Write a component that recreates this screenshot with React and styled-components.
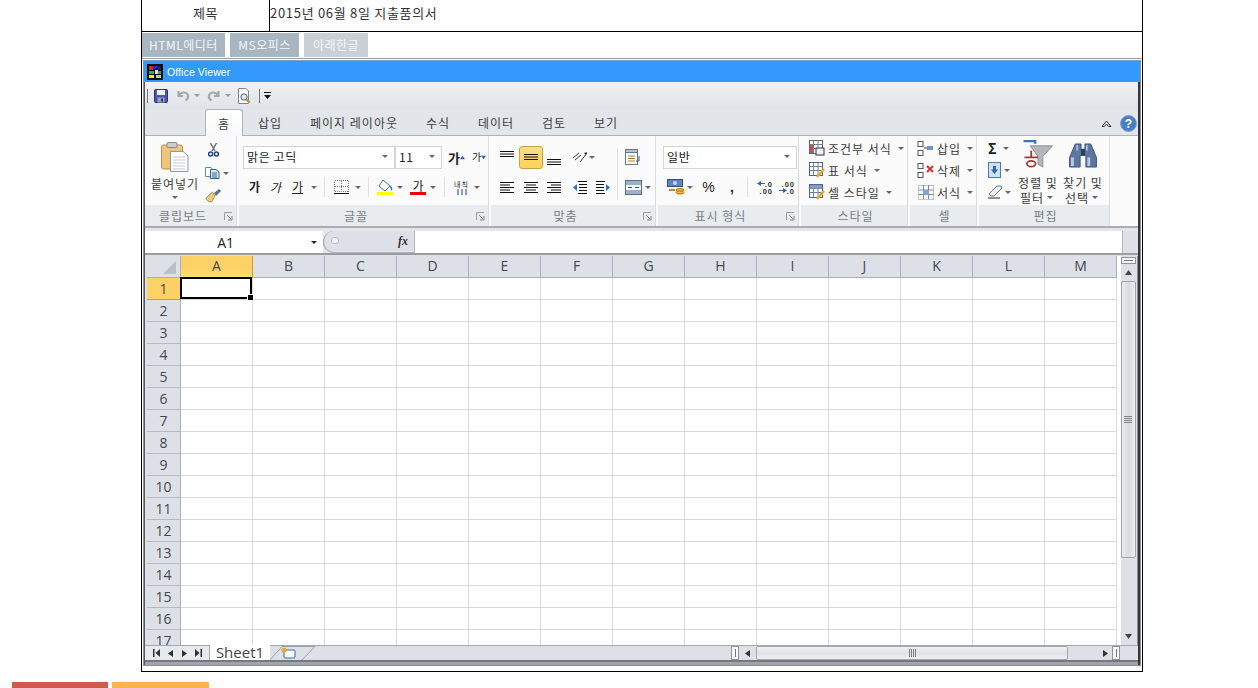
import React from 'react'
import styled, { createGlobalStyle } from 'styled-components'

const Global = createGlobalStyle`
  html, body { margin: 0; padding: 0; background: #fff; overflow: hidden; }
  body { font-family: "Noto Sans CJK KR", "Open Sans", sans-serif; color: #333; }
  * { box-sizing: border-box; }
`
const Page = styled.div`
  height: 688px;
  display: flex;
  flex-direction: column;
`
const Frame = styled.div`
  width: 1002px;
  height: 672px;
  flex: none;
  margin-left: 141px;
  border: 1px solid #000;
  border-top: 0;
  display: flex;
  flex-direction: column;
`
const TitleRow = styled.div`
  height: 32px;
  flex: none;
  display: flex;
  border-bottom: 1px solid #000;
  font-size: 13px;
  line-height: 26px;
`
const TitleHead = styled.div`
  width: 128px;
  border-right: 1px solid #000;
  text-align: center;
  letter-spacing: .5px;
`
const TitleValue = styled.div`
  letter-spacing: .7px;
`
const ModeTabs = styled.div`
  height: 27px;
  flex: none;
  display: flex;
  gap: 5px;
  padding: 1px 0;
  border-bottom: 1px solid #9a9a9a;
`
const ModeTab = styled.div`
  width: ${p => p.$w}px;
  background: ${p => p.$light ? '#c9d1d6' : '#a8b6c1'};
  color: #f2f5f7;
  font-size: 12px;
  line-height: 24px;
  letter-spacing: .5px;
  text-align: center;
`
const Viewer = styled.div`
  flex: 1;
  min-height: 0;
  margin: 1px 0 5px 1px;
  width: 998px;
  border: 1px solid #8f8f8f;
  border-top-color: #7a9cc0;
  display: flex;
  flex-direction: column;
`
const TitleBar = styled.div`
  height: 21px;
  flex: none;
  background: #3399ff;
  display: flex;
  align-items: center;
  gap: 4px;
  padding-left: 3px;
  color: #fff;
  font-size: 10.5px;
  letter-spacing: .1px;
  font-family: "Liberation Sans", sans-serif;
`
const AppBody = styled.div`
  flex: 1;
  min-height: 0;
  border-left: 1px solid #55585c;
  border-right: 2px solid #33363a;
  display: flex;
  flex-direction: column;
  background: #e2e6ea;
`
const Qat = styled.div`
  height: 27px;
  flex: none;
  display: flex;
  align-items: center;
  padding-left: 2px;
  background: linear-gradient(#f0f2f4, #dfe3e7);
`
const QatBar = styled.i`
  width: 1px;
  height: 14px;
  flex: none;
  background: #777;
  margin-left: ${p => p.$l || 0}px;
`
const Slot = styled.span`
  display: inline-flex;
  flex: none;
  margin-left: ${p => p.$l || 0}px;
`
const Caret = styled.i`
  width: 0;
  height: 0;
  flex: none;
  border-left: 3px solid transparent;
  border-right: 3px solid transparent;
  border-top: 3px solid ${p => p.$c || '#666'};
  margin: ${p => p.$m || '0 3px'};
`
const RibbonTabs = styled.div`
  height: 27px;
  flex: none;
  display: flex;
  align-items: stretch;
  padding-left: 60px;
  padding-right: 1px;
  border-bottom: 1px solid #aeb3b8;
  background: #e2e6ea;
`
const RibbonTab = styled.div`
  width: ${p => p.$w}px;
  font-size: 12px;
  line-height: 27px;
  letter-spacing: 1px;
  text-align: center;
  color: #3c3c3c;
  ${p => p.$active && `
    background: linear-gradient(#fff, #f8f9fa);
    border: 1px solid #aeb3b8;
    border-bottom: 0;
    border-radius: 3px 3px 0 0;
    margin-bottom: -1px;
    height: 27px;
  `}
`
const TabEnd = styled.div`
  margin-left: auto;
  display: flex;
  align-items: center;
  gap: 8px;
  padding-top: 2px;
`
const Ribbon = styled.div`
  height: 92px;
  flex: none;
  display: flex;
  gap: 2px;
  background: #fbfbfc;
  border-bottom: 2px solid #a9adb2;
`
const Group = styled.div`
  width: ${p => p.$w}px;
  flex: none;
  display: flex;
  flex-direction: column;
  border-right: 1px solid #d8dce0;
`
const GroupBody = styled.div`
  height: 69px;
  flex: none;
  display: flex;
  padding: ${p => p.$pt || 0}px 0 0 ${p => p.$pl || 0}px;
  gap: ${p => p.$gap || 0}px;
`
const Caption = styled.div`
  flex: 1;
  position: relative;
  background: #e9ecef;
  color: #777c82;
  font-size: 12px;
  line-height: 21px;
  letter-spacing: 1px;
  text-align: center;
  padding: ${p => p.$launch ? '0 15px 0 0' : '0 0 0 3px'};
`
const Launcher = styled.svg`
  position: absolute;
  right: 3px;
  top: 7px;
  width: 9px;
  height: 9px;
`
const Col = styled.div`
  display: flex;
  flex: none;
  flex-direction: column;
  width: ${p => p.$w ? `${p.$w}px` : 'auto'};
  align-items: ${p => p.$align || 'flex-start'};
  gap: ${p => p.$gap || 0}px;
  padding-top: ${p => p.$pt || 0}px;
`
const Row = styled.div`
  display: flex;
  align-items: center;
  height: ${p => p.$h || 22}px;
  gap: ${p => p.$gap || 0}px;
  padding-left: ${p => p.$pl || 0}px;
  color: #3c3c3c;
  font-size: 12px;
  letter-spacing: 1px;
  white-space: nowrap;
`
const Combo = styled.div`
  width: ${p => p.$w}px;
  height: 23px;
  border: 1px solid #d2d6da;
  background: #fff;
  display: flex;
  align-items: center;
  justify-content: space-between;
  padding: 0 3px 2px;
  font-size: 12px;
  letter-spacing: .6px;
  color: #222;
`
const BigLabel = styled.div`
  font-size: 12px;
  line-height: 15px;
  letter-spacing: 1px;
  text-align: center;
  color: #3c3c3c;
  white-space: nowrap;
  margin-top: ${p => p.$mt || 0}px;
`
const Sep = styled.i`
  width: 1px;
  height: ${p => p.$h || 20}px;
  flex: none;
  background: #dfe2e5;
  margin: ${p => p.$m || '0 4px'};
`
const ActiveBtn = styled.div`
  width: 24px;
  height: 23px;
  border: 1px solid #c9a04e;
  border-radius: 3px;
  background: linear-gradient(#ffdf7f, #ffd257);
  display: flex;
  align-items: center;
  justify-content: center;
  margin-left: ${p => p.$l || 0}px;
`
const Glyph = styled.span`
  font-size: ${p => p.$s || 12}px;
  font-weight: ${p => p.$b ? 700 : 400};
  font-style: ${p => p.$i ? 'italic' : 'normal'};
  text-decoration: ${p => p.$u ? 'underline' : 'none'};
  color: #222;
  line-height: 1;
  letter-spacing: 0;
  flex: none;
  margin-left: ${p => p.$l || 0}px;
`
const ColorGlyph = styled(Glyph)`
  width: 16px;
  text-align: center;
  line-height: 13px;
  border-bottom: 3px solid #e00;
`
const Symbol = styled(Glyph)`
  font-family: "Liberation Sans", sans-serif;
  font-size: 14px;
  width: ${p => p.$w}px;
  text-align: center;
`
const FormulaBar = styled.div`
  height: 27px;
  flex: none;
  display: flex;
  padding-top: 3px;
  background: #e2e6ea;
  border-bottom: 2px solid #9a9ea3;
`
const NameBox = styled.div`
  width: 178px;
  display: flex;
  align-items: center;
  justify-content: flex-end;
  padding-right: 6px;
  gap: 77px;
  background: #fff;
  font-size: 14px;
  color: #222;
  font-family: "Open Sans", sans-serif;
`
const FxBox = styled.div`
  width: 92px;
  position: relative;
  background: #dde1e7;
  border: 1px solid #b4b8bd;
  border-left-color: #9ea3a8;
  border-top: 0;
  border-radius: 12px 0 0 12px;
  display: flex;
  align-items: center;
  justify-content: flex-end;
  padding-right: 6px;
  font-family: "Liberation Serif", serif;
  font-style: italic;
  font-weight: 700;
  font-size: 12px;
  color: #333;
  &::before {
    content: '';
    position: absolute;
    left: 7px;
    top: 6px;
    width: 6px;
    height: 5px;
    border-radius: 3px;
    background: #f1f3f5;
    border: 1px solid #b9bdc2;
  }
`
const FormulaInput = styled.div`
  flex: 1;
  background: #fff;
`
const FormulaEnd = styled.div`
  width: 16px;
  background: #dde1e7;
  border-left: 1px solid #b4b8bd;
`
const SheetArea = styled.div`
  flex: 1;
  min-height: 0;
  display: flex;
  background: #dde1e7;
  padding: 1px 0 0 2px;
`
const GridWrap = styled.div`
  width: 974px;
  flex: none;
  overflow: hidden;
  position: relative;
  background: #fff;
`
const Cells = styled.div`
  display: grid;
  grid-template-columns: 34px repeat(13, 72px);
  grid-auto-rows: 22px;
`
const ColHead = styled.div`
  background: ${p => p.$on ? 'linear-gradient(#fdd166 60%, #ffe06e)' : '#dde1e7'};
  border-right: 1px solid ${p => p.$on ? '#d09a34' : '#a9b0b8'};
  border-bottom: 1px solid ${p => p.$on ? '#d09a34' : '#a9b0b8'};
  color: #44484e;
  font-size: 14px;
  line-height: 20px;
  text-align: center;
  font-family: "Open Sans", sans-serif;
  position: relative;
`
const RowHead = styled.div`
  background: ${p => p.$on ? '#fdd166' : '#dde1e7'};
  border-right: 1px solid ${p => p.$on ? '#d09a34' : '#a9b0b8'};
  border-bottom: 1px solid ${p => p.$on ? '#d09a34' : '#b4bac1'};
  color: #44484e;
  font-size: 14px;
  line-height: 21px;
  text-align: center;
  font-family: "Open Sans", sans-serif;
`
const Cell = styled.div`
  border-right: 1px solid #d9d9d9;
  border-bottom: 1px solid #d9d9d9;
  position: relative;
`
const Corner = styled.i`
  position: absolute;
  right: 4px;
  bottom: 3px;
  width: 0;
  height: 0;
  border-left: 13px solid transparent;
  border-bottom: 13px solid #b9bfc6;
`
const Selection = styled.div`
  position: absolute;
  inset: -1px 0 0 -1px;
  border: 2px solid #000;
  &::after {
    content: '';
    position: absolute;
    right: -4px;
    bottom: -4px;
    width: 5px;
    height: 5px;
    background: #000;
    border: 1px solid #fff;
  }
`
const VScroll = styled.div`
  width: 17px;
  flex: none;
  display: flex;
  flex-direction: column;
  align-items: center;
  padding-right: 2px;
  background: #dde1e7;
  border-right: 1px solid #8a8e93;
`
const Splitter = styled.div`
  width: 15px;
  height: 7px;
  flex: none;
  margin-top: 1px;
  background: #f4f5f7;
  border: 1px solid #8e9399;
  display: flex;
  align-items: center;
  justify-content: center;
  &::after { content: ''; width: 9px; height: 1px; background: #777; }
`
const ScrollBtn = styled.div`
  height: ${p => p.$h}px;
  width: ${p => p.$w ? `${p.$w}px` : 'auto'};
  flex: none;
  display: flex;
  align-items: center;
  justify-content: center;
`
const VThumb = styled.div`
  width: 15px;
  height: 277px;
  flex: none;
  background: linear-gradient(90deg, #e8ebee, #d7dbe0 50%, #eceef0);
  border: 1px solid #9ea3a9;
  border-radius: 2px;
  display: flex;
  flex-direction: column;
  align-items: center;
  justify-content: center;
  gap: 1px;
`
const Grip = styled.i`
  width: ${p => p.$v ? '1px' : '8px'};
  height: ${p => p.$v ? '8px' : '1px'};
  background: #7d8186;
`
const Spacer = styled.div`
  flex: 1;
`
const BottomBar = styled.div`
  height: 15px;
  flex: none;
  display: flex;
  align-items: stretch;
  background: #dde1e7;
  border-top: 1px solid #a4a9af;
`
const BottomEdge = styled.div`
  height: 5px;
  flex: none;
  background: #a0a5ab;
  border-top: 2px solid #767a80;
`
const SheetNav = styled.div`
  width: 65px;
  flex: none;
  display: flex;
  align-items: center;
  justify-content: space-around;
  padding: 0 4px 0 5px;
  background: #e6e9ed;
  border-right: 1px solid #a4a9af;
`
const SheetTab = styled.div`
  width: 60px;
  flex: none;
  background: #fff;
  margin-top: -1px;
  font-family: "Open Sans", sans-serif;
  font-size: 15px;
  line-height: 15px;
  color: #444;
  text-align: center;
  white-space: nowrap;
`
const NewSheet = styled.svg`
  width: 46px;
  height: 14px;
  flex: none;
`
const HScrollArea = styled.div`
  margin-left: auto;
  display: flex;
  align-items: center;
  width: 407px;
  flex: none;
`
const MiniSplit = styled.i`
  width: 8px;
  height: 14px;
  flex: none;
  background: #fafafa;
  border: 1px solid #8e9399;
  display: flex;
  justify-content: center;
  margin-right: ${p => p.$r || 0}px;
  &::after { content: ''; width: 1px; height: 8px; margin-top: 2px; background: #777; }
`
const HThumb = styled.div`
  width: 312px;
  height: 14px;
  flex: none;
  background: linear-gradient(#eef0f2, #dfe3e7 50%, #edeff1);
  border: 1px solid #a4a9af;
  border-radius: 2px;
  display: flex;
  align-items: center;
  justify-content: center;
  gap: 1px;
`
const ColorBars = styled.div`
  flex: 1;
  display: flex;
  align-items: flex-end;
  gap: 4px;
  padding-left: 12px;
`
const ColorBar = styled.i`
  width: ${p => p.$w}px;
  height: 6px;
  background: ${p => p.$c};
`

const Tri = ({ dir = 'down', size = 7, color = '#555' }) => {
  const pts = { down: '0,1 7,1 3.5,6', up: '0,6 7,6 3.5,1', left: '6,0 6,7 1,3.5', right: '1,0 1,7 6,3.5' }
  return <svg width={size} height={size} viewBox="0 0 7 7"><polygon points={pts[dir]} fill={color} /></svg>
}

const NavEnd = ({ last }) => (
  <svg width="8" height="8" viewBox="0 0 8 8">
    {last
      ? <path d="M1 0 L5.5 4 L1 8 Z M6.5 0 H8 V8 H6.5 Z" fill="#333" />
      : <path d="M7 0 L2.5 4 L7 8 Z M0 0 H1.5 V8 H0 Z" fill="#333" />}
  </svg>
)

const Lines = ({ widths = [14, 10, 14, 10, 14], y = 3, step = 2.5, anchor = 'left', color = '#111' }) => (
  <svg width="16" height="16" viewBox="0 0 16 16">
    {widths.map((w, i) => {
      const x = anchor === 'left' ? 1 : anchor === 'right' ? 15 - w : 8 - w / 2
      return <rect key={i} x={x} y={y + i * step} width={w} height="1" fill={color} />
    })}
  </svg>
)

const LogoIcon = () => (
  <svg width="16" height="16" viewBox="0 0 16 16" shapeRendering="crispEdges">
    <rect x=".5" y=".5" width="15" height="15" fill="#000" stroke="#111" />
    <rect x="2" y="2" width="4" height="4" fill="#d22" />
    <rect x="6" y="2" width="4" height="3" fill="#22c" />
    <rect x="10" y="2" width="4" height="4" fill="#225" />
    <rect x="2" y="7" width="5" height="3" fill="#2b3" />
    <rect x="8" y="6" width="3" height="4" fill="#dde" />
    <rect x="11" y="7" width="3" height="3" fill="#2a5" />
    <rect x="2" y="11" width="5" height="3" fill="#ee2" />
    <rect x="9" y="11" width="5" height="3" fill="#9d9" />
  </svg>
)

const SaveIcon = () => (
  <svg width="14" height="14" viewBox="0 0 14 14">
    <rect x=".5" y=".5" width="13" height="13" rx="1" fill="#4a54a8" stroke="#2c3478" />
    <rect x="3" y="1" width="8" height="5" fill="#eef" />
    <rect x="3.5" y="8.5" width="7" height="5" fill="#9aa0c8" />
    <rect x="7" y="9.5" width="2" height="3" fill="#334" />
  </svg>
)

const UndoIcon = ({ flip }) => (
  <svg width="14" height="13" viewBox="0 0 14 13">
    <g transform={flip ? 'matrix(-1 0 0 1 14 0)' : undefined}>
      <path d="M2.5 2 V7 H7 M3 6.5 C5 2.5 11 2.5 12 6.5 C12.5 8.5 11 10.5 9.5 11.5" fill="none" stroke="#a3a8ad" strokeWidth="2.2" />
    </g>
  </svg>
)

const PreviewIcon = () => (
  <svg width="16" height="16" viewBox="0 0 16 16">
    <path d="M1.5 .5 H9 L11.5 3 V15.5 H1.5 Z" fill="#fff" stroke="#7b8492" />
    <circle cx="7" cy="9" r="3.2" fill="#dbe7f3" stroke="#56606e" />
    <path d="M9.5 11.5 L12.5 14.5" stroke="#d08a20" strokeWidth="2.2" />
  </svg>
)

const QatMore = () => (
  <svg width="7" height="7" viewBox="0 0 7 7">
    <rect x="0" y="0" width="7" height="1" fill="#111" />
    <polygon points="0,3 7,3 3.5,7" fill="#111" />
  </svg>
)

const HelpIcon = () => (
  <svg width="17" height="17" viewBox="0 0 17 17">
    <circle cx="8.5" cy="8.5" r="8" fill="#4a7ec4" stroke="#7ea4d6" />
    <text x="8.5" y="13" textAnchor="middle" fontSize="12" fontWeight="700" fill="#fff" fontFamily="Liberation Sans">?</text>
  </svg>
)

const PasteIcon = () => (
  <svg width="28" height="30" viewBox="0 0 28 30">
    <rect x=".5" y="3" width="21" height="24" rx="2" fill="#eec57c" stroke="#b98f4d" />
    <rect x="6" y=".5" width="10" height="5" rx="1" fill="#c9ccd0" stroke="#87898d" />
    <path d="M9.5 9.5 H22 L27 14 V29.5 H9.5 Z" fill="#fff" stroke="#8d97a3" />
    <path d="M12 15 H24 M12 18 H24 M12 21 H24 M12 24 H24 M12 27 H24" stroke="#c3c9d0" />
  </svg>
)

const CutIcon = () => (
  <svg width="11" height="14" viewBox="0 0 11 14">
    <path d="M2.5 0 L7 8 M8.5 0 L4 8" stroke="#6d7278" strokeWidth="1.5" />
    <circle cx="2.6" cy="11" r="2" fill="none" stroke="#24408c" strokeWidth="1.5" />
    <circle cx="8.4" cy="11" r="2" fill="none" stroke="#24408c" strokeWidth="1.5" />
  </svg>
)

const CopyIcon = () => (
  <svg width="15" height="12" viewBox="0 0 15 12">
    <path d="M.5 .5 H6 L8 2.5 V9.5 H.5 Z" fill="#fff" stroke="#5a86bb" />
    <path d="M5.5 2.5 H11 L14 5 V11.5 H5.5 Z" fill="#dfeaf6" stroke="#33609c" />
    <path d="M7 6 H12 M7 8 H12 M7 10 H12" stroke="#33609c" />
  </svg>
)

const BrushIcon = () => (
  <svg width="16" height="14" viewBox="0 0 16 14">
    <path d="M9 4 L14 0 L16 2 L11 7 Z" fill="#5c6d96" />
    <path d="M10 7 L7.5 3 L1 9 C1 11 3 13 6.5 13 Z" fill="#e5cc86" stroke="#b09550" />
  </svg>
)

const BordersIcon = () => (
  <svg width="15" height="15" viewBox="0 0 15 15" shapeRendering="crispEdges">
    <rect x=".5" y=".5" width="14" height="11" fill="none" stroke="#777" strokeDasharray="1 1" />
    <path d="M7.5 .5 V12 M.5 6.5 H14.5" stroke="#777" strokeDasharray="1 1" />
    <rect x="0" y="13" width="15" height="1" fill="#111" />
  </svg>
)

const FillIcon = () => (
  <svg width="16" height="16" viewBox="0 0 16 16">
    <path d="M6 1 L13 7 L8 12 L2 7 Z" fill="#fff" stroke="#546a8c" />
    <path d="M13 7 C15 9 15 10 14 11" fill="none" stroke="#2d6fb3" strokeWidth="1.5" />
    <rect x="0" y="13" width="16" height="3" fill="#ffff00" />
  </svg>
)

const WrapIcon = () => (
  <svg width="15" height="17" viewBox="0 0 15 17">
    <text x="7.5" y="8" textAnchor="middle" fontSize="7" fill="#111" fontFamily="Noto Sans CJK KR">내칙</text>
    <path d="M4 10 V16 M8 10 V16 M12 10 V16" stroke="#2f62a8" strokeWidth="1.2" />
  </svg>
)

const OrientIcon = () => (
  <svg width="16" height="12" viewBox="0 0 16 12">
    <path d="M1 7 L7 2 M3 9 L9 4 M8 11 L15 2" stroke="#333" fill="none" />
    <path d="M15 1 L12 2 L14 4 Z" fill="#333" />
  </svg>
)

const IndentIcon = ({ flip }) => (
  <svg width="16" height="15" viewBox="0 0 16 15">
    <g transform={flip ? 'matrix(-1 0 0 1 16 0)' : undefined}>
      <path d="M6 1.5 H15 M7 4.5 H15 M7 7.5 H15 M7 10.5 H15 M6 13.5 H15" stroke="#111" />
      <path d="M1 7.5 L5 4 V11 Z" fill="#2f6fc0" />
    </g>
  </svg>
)

const TextWrapIcon = () => (
  <svg width="17" height="16" viewBox="0 0 17 16">
    <rect x=".5" y="2.5" width="12" height="13" fill="#fff" stroke="#6a7685" />
    <rect x=".5" y=".5" width="12" height="3" fill="#b7c2d0" stroke="#6a7685" />
    <path d="M3 7 H10 M3 9.5 H10 M3 12 H10" stroke="#b07a30" />
    <path d="M14 7 V12 H11" fill="none" stroke="#2d5b93" />
  </svg>
)

const MergeIcon = () => (
  <svg width="17" height="15" viewBox="0 0 17 15">
    <rect x=".5" y=".5" width="16" height="14" fill="#9db0c7" stroke="#5d708a" />
    <rect x="1" y="5" width="15" height="5" fill="#fff" />
    <path d="M3 7.5 H7 M10 7.5 H14" stroke="#2d5b93" />
  </svg>
)

const AccountingIcon = () => (
  <svg width="18" height="16" viewBox="0 0 18 16">
    <rect x=".5" y=".5" width="15" height="7" fill="#5f86bd" stroke="#2e4f80" />
    <circle cx="8" cy="4" r="2" fill="#c8d8ea" />
    <ellipse cx="13" cy="11" rx="4" ry="1.6" fill="#f0b93c" stroke="#b07c14" />
    <ellipse cx="13" cy="13.5" rx="4" ry="1.6" fill="#f0b93c" stroke="#b07c14" />
    <path d="M2 11 H8" stroke="#c78a1c" strokeWidth="2" />
  </svg>
)

const DecimalIcon = ({ top, bottom, arrowTop }) => (
  <svg width="18" height="15" viewBox="0 0 18 15">
    <text x="17" y="6.5" textAnchor="end" fontSize="7.5" fontWeight="700" fill="#333" fontFamily="Liberation Sans">{top}</text>
    <text x="17" y="14" textAnchor="end" fontSize="7.5" fontWeight="700" fill="#333" fontFamily="Liberation Sans">{bottom}</text>
    <path d={arrowTop ? 'M1 3.5 L5 1 V6 Z M5 3 H9 V4 H5 Z' : 'M9 10.5 L5 8 V13 Z M1 10 H5 V11 H1 Z'} fill="#2f62a8" />
  </svg>
)

const TableStyleIcon = ({ kind }) => (
  <svg width="16" height="16" viewBox="0 0 16 16">
    <rect x=".5" y=".5" width="13" height="13" fill="#fff" stroke="#53647c" />
    <path d="M.5 4.5 H13.5 M.5 8.5 H13.5 M4.5 .5 V13.5 M9 .5 V13.5" stroke="#6f82a0" />
    {kind === 'cond' && <rect x="1" y="5" width="3" height="8" fill="#d84a3a" />}
    {kind === 'cond' && <rect x="7" y="8" width="8" height="7" fill="#eef" stroke="#333" />}
    {kind === 'cell' && <rect x="1" y="1" width="12" height="3.5" fill="#7f9dc8" />}
    {kind !== 'cond' && <path d="M8 15 L15 7" stroke="#e6a92c" strokeWidth="2.4" />}
  </svg>
)

const CellOpIcon = ({ kind }) => (
  <svg width="17" height="15" viewBox="0 0 17 15">
    <rect x="1" y=".5" width="5" height="5" fill="#fff" stroke="#555" />
    <rect x="1" y="9.5" width="5" height="5" fill="#fff" stroke="#555" />
    {kind === 'ins' && <rect x="10" y="5" width="6" height="4" fill="#6d95cc" />}
    {kind === 'ins' && <path d="M7 7 H10" stroke="#333" />}
    {kind === 'del' && <path d="M10 3 L16 9 M16 3 L10 9" stroke="#dd3322" strokeWidth="2" />}
  </svg>
)

const FormatIcon = () => (
  <svg width="17" height="16" viewBox="0 0 17 16">
    <rect x="1.5" y="1.5" width="15" height="14" fill="#fff" stroke="#7d8894" strokeDasharray="1 1" />
    <path d="M1.5 6 H16.5 M1.5 10.5 H16.5 M6.5 1 V15 M11.5 1 V15" stroke="#7d8894" />
    <rect x="6" y="6" width="6" height="5" fill="#7fa3d4" />
  </svg>
)

const FillDownIcon = () => (
  <svg width="13" height="16" viewBox="0 0 13 16">
    <rect x=".5" y=".5" width="12" height="15" fill="#cfe0f3" stroke="#4d79b2" />
    <path d="M6.5 12 L3 7.5 H5 V4 H8 V7.5 H10 Z" fill="#2d66b8" />
  </svg>
)

const EraserIcon = () => (
  <svg width="15" height="14" viewBox="0 0 15 14">
    <path d="M1 9 L9 1 H13 L14 3 L6 11 H3 Z" fill="#eceff3" stroke="#6e7a88" />
    <path d="M0 13 H12" stroke="#222" />
  </svg>
)

const SortIcon = () => (
  <svg width="32" height="30" viewBox="0 0 32 30">
    <path d="M1 1 H13 V4" fill="none" stroke="#3f74bd" strokeWidth="2.6" />
    <path d="M8 6 H31 L21 17 V28 L16 25 V17 Z" fill="#b3b7bc" stroke="#8b8f94" />
    <path d="M2 18 H16" stroke="#a0352d" strokeWidth="1.8" />
    <ellipse cx="9" cy="24.5" rx="4.5" ry="3" fill="none" stroke="#a0352d" strokeWidth="1.8" />
    <path d="M9 11 V18" stroke="#a0352d" strokeWidth="1.8" />
  </svg>
)

const FindIcon = () => (
  <svg width="30" height="26" viewBox="0 0 30 26">
    <path d="M7 1 H13 V9 H17 V1 H23 L29 15 V25 H18 V13 H12 V25 H1 V15 Z" fill="#5d76a1" stroke="#3f5379" />
    <rect x="2.5" y="15" width="3" height="9" fill="#b8c9e0" />
    <rect x="19.5" y="15" width="3" height="9" fill="#b8c9e0" />
    <rect x="8" y="2" width="2" height="6" fill="#a7bad6" />
    <rect x="18" y="2" width="2" height="6" fill="#a7bad6" />
    <rect x="13" y="6" width="4" height="7" fill="#2c3c5c" />
  </svg>
)

const Launch = () => (
  <Launcher viewBox="0 0 9 9">
    <path d="M.5 8 V.5 H8" fill="none" stroke="#9aa0a6" />
    <path d="M3 3 L7 7 M8 4 V8 H4" fill="none" stroke="#7f858b" />
  </Launcher>
)

const colLetters = 'ABCDEFGHIJKLM'.split('')
const rowNums = Array.from({ length: 17 }, (_, i) => i + 1)

function SheetGrid() {
  return (
    <Cells>
      <ColHead><Corner /></ColHead>
      {colLetters.map(c => <ColHead key={c} $on={c === 'A'}>{c}</ColHead>)}
      {rowNums.map(r => (
        <React.Fragment key={r}>
          <RowHead $on={r === 1}>{r}</RowHead>
          {colLetters.map(c => (
            <Cell key={c}>{r === 1 && c === 'A' && <Selection />}</Cell>
          ))}
        </React.Fragment>
      ))}
    </Cells>
  )
}

export default function App() {
  return (
    <Page>
      <Global />
      <Frame>
        <TitleRow>
          <TitleHead>제목</TitleHead>
          <TitleValue>2015년 06월 8일 지출품의서</TitleValue>
        </TitleRow>
        <ModeTabs>
          <ModeTab $w={83}>HTML에디터</ModeTab>
          <ModeTab $w={69}>MS오피스</ModeTab>
          <ModeTab $w={64} $light>아래한글</ModeTab>
        </ModeTabs>
        <Viewer>
          <TitleBar><LogoIcon />Office Viewer</TitleBar>
          <AppBody>
            <Qat>
              <QatBar />
              <Slot $l={6}><SaveIcon /></Slot>
              <Slot $l={8}><UndoIcon /></Slot>
              <Caret $m="0 0 0 4px" $c="#999" />
              <Slot $l={7}><UndoIcon flip /></Slot>
              <Caret $m="0 0 0 4px" $c="#999" />
              <Slot $l={6}><PreviewIcon /></Slot>
              <QatBar $l={6} />
              <Slot $l={4}><QatMore /></Slot>
            </Qat>
            <RibbonTabs>
              <RibbonTab $active $w={38}>홈</RibbonTab>
              <RibbonTab $w={54}>삽입</RibbonTab>
              <RibbonTab $w={114}>페이지 레이아웃</RibbonTab>
              <RibbonTab $w={54}>수식</RibbonTab>
              <RibbonTab $w={62}>데이터</RibbonTab>
              <RibbonTab $w={54}>검토</RibbonTab>
              <RibbonTab $w={50}>보기</RibbonTab>
              <TabEnd>
                <svg width="11" height="9" viewBox="0 0 11 9"><path d="M1 7.5 L5.5 2 L10 7.5 H7.5 L5.5 5 L3.5 7.5 Z" fill="none" stroke="#333" /></svg>
                <HelpIcon />
              </TabEnd>
            </RibbonTabs>
            <Ribbon>
              <Group $w={92}>
                <GroupBody $pl={5} $pt={4} $gap={5}>
                  <Col $w={50} $align="center" $pt={2}>
                    <PasteIcon />
                    <BigLabel $mt={4}>붙여넣기</BigLabel>
                    <Caret $m="5px 0 0" />
                  </Col>
                  <Col $w={28} $pt={3} $gap={10}>
                    <Slot $l={3}><CutIcon /></Slot>
                    <Row $h={12}><CopyIcon /><Caret $m="0 0 0 3px" /></Row>
                    <BrushIcon />
                  </Col>
                </GroupBody>
                <Caption $launch>클립보드<Launch /></Caption>
              </Group>
              <Group $w={250}>
                <GroupBody $pl={4} $pt={7}>
                  <Col>
                    <Row $h={28}>
                      <Combo $w={152}><span>맑은 고딕</span><Caret /></Combo>
                      <Combo $w={47}><span>11</span><Caret /></Combo>
                      <Glyph $s={13} $b $l={6}>가</Glyph><Tri dir="up" size={5} color="#2f62a8" />
                      <Glyph $s={10} $l={7}>가</Glyph><Tri size={5} color="#2f62a8" />
                    </Row>
                    <Row $h={32}>
                      <Glyph $b $l={6}>가</Glyph>
                      <Glyph $i $l={10}>가</Glyph>
                      <Glyph $u $l={11}>가</Glyph>
                      <Caret $m="0 0 0 8px" />
                      <Sep $m="0 0 0 7px" />
                      <Slot $l={9}><BordersIcon /></Slot>
                      <Caret $m="0 0 0 6px" />
                      <Sep $m="0 0 0 7px" />
                      <Slot $l={8}><FillIcon /></Slot>
                      <Caret $m="0 0 0 4px" />
                      <ColorGlyph $l={7}>가</ColorGlyph>
                      <Caret $m="0 0 0 4px" />
                      <Sep $m="0 0 0 8px" />
                      <Slot $l={9}><WrapIcon /></Slot>
                      <Caret $m="0 0 0 5px" />
                    </Row>
                  </Col>
                </GroupBody>
                <Caption $launch>글꼴<Launch /></Caption>
              </Group>
              <Group $w={165}>
                <GroupBody $pl={8} $pt={7}>
                  <Col $w={112}>
                    <Row $h={28}>
                      <Lines widths={[14, 14, 14]} y={2} />
                      <ActiveBtn $l={4}><Lines widths={[14, 14, 14]} y={5} /></ActiveBtn>
                      <Slot $l={3}><Lines widths={[14, 14, 14]} y={10} /></Slot>
                      <Slot $l={10}><OrientIcon /></Slot>
                      <Caret $m="0 0 0 1px" />
                    </Row>
                    <Row $h={32}>
                      <Lines />
                      <Slot $l={8}><Lines anchor="center" /></Slot>
                      <Slot $l={7}><Lines anchor="right" /></Slot>
                      <Slot $l={10}><IndentIcon /></Slot>
                      <Slot $l={7}><IndentIcon flip /></Slot>
                    </Row>
                  </Col>
                  <Sep $h={52} $m="5px 7px 0 6px" />
                  <Col>
                    <Row $h={28}><TextWrapIcon /></Row>
                    <Row $h={32}><MergeIcon /><Caret $m="0 0 0 3px" /></Row>
                  </Col>
                </GroupBody>
                <Caption $launch>맞춤<Launch /></Caption>
              </Group>
              <Group $w={141}>
                <GroupBody $pl={5} $pt={7}>
                  <Col>
                    <Row $h={28}><Combo $w={134}><span>일반</span><Caret /></Combo></Row>
                    <Row $h={32}>
                      <Slot $l={4}><AccountingIcon /></Slot>
                      <Caret $m="0 0 0 2px" />
                      <Symbol $w={13} $l={9}>%</Symbol>
                      <Symbol $w={6} $l={14} $b>,</Symbol>
                      <Sep $m="0 0 0 12px" />
                      <Slot $l={8}><DecimalIcon top=".0" bottom=".00" arrowTop /></Slot>
                      <Slot $l={4}><DecimalIcon top=".00" bottom=".0" /></Slot>
                    </Row>
                  </Col>
                </GroupBody>
                <Caption $launch>표시 형식<Launch /></Caption>
              </Group>
              <Group $w={107}>
                <GroupBody $pl={8} $pt={1}>
                  <Col>
                    <Row $gap={3}><TableStyleIcon kind="cond" />조건부 서식<Caret /></Row>
                    <Row $gap={3}><TableStyleIcon kind="table" />표 서식<Caret /></Row>
                    <Row $gap={3}><TableStyleIcon kind="cell" />셀 스타일<Caret /></Row>
                  </Col>
                </GroupBody>
                <Caption>스타일</Caption>
              </Group>
              <Group $w={67}>
                <GroupBody $pl={7} $pt={1}>
                  <Col>
                    <Row $gap={3}><CellOpIcon kind="ins" />삽입<Caret /></Row>
                    <Row $gap={3}><CellOpIcon kind="del" />삭제<Caret /></Row>
                    <Row $gap={3}><FormatIcon />서식<Caret /></Row>
                  </Col>
                </GroupBody>
                <Caption>셀</Caption>
              </Group>
              <Group $w={131}>
                <GroupBody $pl={9} $pt={1}>
                  <Col $w={28}>
                    <Row><Glyph $b $s={14}>Σ</Glyph><Caret $m="0 0 0 6px" /></Row>
                    <Row><FillDownIcon /><Caret $m="0 0 0 3px" /></Row>
                    <Row><EraserIcon /><Caret $m="0 0 0 2px" /></Row>
                  </Col>
                  <Col $w={44} $align="center" $pt={3}>
                    <SortIcon />
                    <BigLabel $mt={6}>정렬 및</BigLabel>
                    <Row $h={15}>필터<Caret /></Row>
                  </Col>
                  <Col $w={46} $align="center" $pt={6}>
                    <FindIcon />
                    <BigLabel $mt={7}>찾기 및</BigLabel>
                    <Row $h={15}>선택<Caret /></Row>
                  </Col>
                </GroupBody>
                <Caption>편집</Caption>
              </Group>
            </Ribbon>
            <FormulaBar>
              <NameBox>A1<Caret $m="0" $c="#222" /></NameBox>
              <FxBox>fx</FxBox>
              <FormulaInput />
              <FormulaEnd />
            </FormulaBar>
            <SheetArea>
              <GridWrap><SheetGrid /></GridWrap>
              <VScroll>
                <Splitter />
                <ScrollBtn $h={17}><Tri dir="up" color="#444" /></ScrollBtn>
                <VThumb><Grip /><Grip /><Grip /><Grip /></VThumb>
                <Spacer />
                <ScrollBtn $h={17}><Tri color="#444" /></ScrollBtn>
              </VScroll>
            </SheetArea>
            <BottomBar>
              <SheetNav>
                <NavEnd />
                <Tri dir="left" color="#333" />
                <Tri dir="right" color="#333" />
                <NavEnd last />
              </SheetNav>
              <SheetTab>Sheet1</SheetTab>
              <NewSheet viewBox="0 0 46 14">
                <path d="M0 14 L12 .5 H45 L32 14" fill="none" stroke="#9aa0a6" />
                <rect x="14" y="4" width="11" height="8" rx="1" fill="#f7f8fa" stroke="#3d6da8" />
                <circle cx="14" cy="4" r="2.5" fill="#e6a92c" />
              </NewSheet>
              <HScrollArea>
                <MiniSplit />
                <ScrollBtn $h={14} $w={17}><Tri dir="left" color="#333" /></ScrollBtn>
                <HThumb><Grip $v /><Grip $v /><Grip $v /><Grip $v /></HThumb>
                <Spacer />
                <ScrollBtn $h={14} $w={14}><Tri dir="right" color="#333" /></ScrollBtn>
                <MiniSplit $r={18} />
              </HScrollArea>
            </BottomBar>
            <BottomEdge />
          </AppBody>
        </Viewer>
      </Frame>
      <ColorBars>
        <ColorBar $w={96} $c="#cf5c4a" />
        <ColorBar $w={97} $c="#ffb54f" />
      </ColorBars>
    </Page>
  )
}
